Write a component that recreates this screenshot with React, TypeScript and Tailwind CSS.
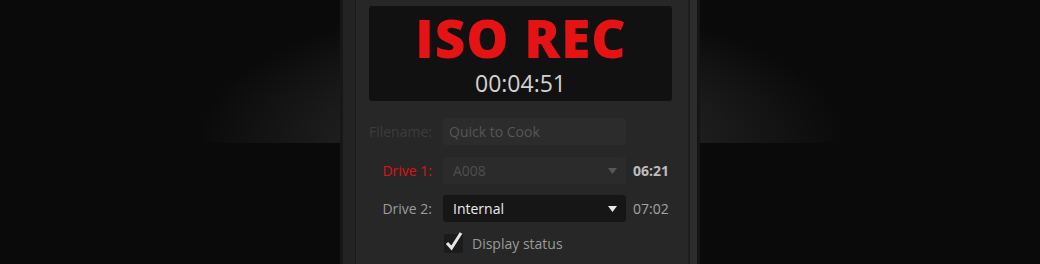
import React from "react";

const font = { fontFamily: '"Open Sans", "Noto Sans", sans-serif' };

function Caret({ color }: { color: string }) {
  return (
    <svg width="9" height="6" viewBox="0 0 9 6" className="shrink-0">
      <path d="M0 0 H9 L4.5 6 Z" fill={color} />
    </svg>
  );
}

export default function App() {
  return (
    <div
      className="w-[1040px] h-[264px] bg-[#0a0a0a] bg-no-repeat bg-[length:100%_143px] bg-[radial-gradient(ellipse_325px_140px_at_520px_143px,#2b2b2b_0%,#222222_45%,#0a0a0a_100%)] flex justify-center"
      style={font}
    >
      <div className="w-[360px] h-full flex">
        <div className="w-[3px] bg-[#171717]" />
        <div className="w-[12px] bg-[#232323]" />
        <div className="w-px bg-[#1b1b1b]" />

        {/* main panel */}
        <div className="flex-1 bg-[#272727] flex flex-col">
          <div className="mt-[6px] ml-[13px] w-[303px] h-[95px] rounded-[3px] bg-[#111111] flex flex-col items-center">
            <div className="mt-[6px] pl-[1px] text-[53px] leading-[52px] font-extrabold tracking-[1px] text-[#e51313]">ISO REC</div>
            <div className="mt-[5px] text-[23px] leading-[28px] text-[#d2d2d2]">00:04:51</div>
          </div>

          <div className="mt-[17px] flex items-center h-[27px]">
            <div className="w-[76px] text-right text-[14px] text-[#3c3c3c]">Filename:</div>
            <div className="ml-[11px] w-[183px] h-full rounded-[3px] bg-[#2c2c2c] flex items-center pl-[6px] text-[14px] text-[#565656]">
              Quick to Cook
            </div>
          </div>

          <div className="mt-[12px] flex items-center h-[27px]">
            <div className="w-[76px] text-right text-[14px] text-[#e01010]">Drive 1:</div>
            <div className="ml-[11px] w-[183px] h-full rounded-[3px] bg-[#2b2b2b] flex items-center pl-[10px] pr-[9px] text-[14px] text-[#4e4e4e]">
              <span className="flex-1">A008</span>
              <Caret color="#575757" />
            </div>
            <div className="ml-[7px] text-[14px] font-bold text-[#bdbdbd]">06:21</div>
          </div>

          <div className="mt-[11px] flex items-center h-[27px]">
            <div className="w-[76px] text-right text-[14px] text-[#9c9c9c]">Drive 2:</div>
            <div className="ml-[11px] w-[183px] h-full rounded-[3px] bg-[#161616] flex items-center pl-[10px] pr-[9px] text-[14px] text-[#ececec]">
              <span className="flex-1">Internal</span>
              <Caret color="#e8e8e8" />
            </div>
            <div className="ml-[7px] text-[14px] text-[#a4a4a4]">07:02</div>
          </div>

          <div className="mt-[12px] ml-[88px] flex items-center h-[19px]">
            <div className="w-[19px] h-[19px] rounded-[2px] bg-[#1b1b1b] relative">
              <svg width="22" height="22" viewBox="0 0 22 22" className="absolute left-[-1px] top-[-4px]">
                <path d="M4 13 L8.5 18 L18 3" stroke="#e6e6e6" strokeWidth="3" fill="none" strokeLinejoin="miter" />
              </svg>
            </div>
            <div className="ml-[9px] text-[14px] text-[#9a9a9a]">Display status</div>
          </div>
        </div>

        <div className="w-[2px] bg-[#1d1d1d]" />
        <div className="w-[7px] bg-[#2c2c2c]" />
        <div className="w-[3px] bg-[#151515]" />
      </div>
    </div>
  );
}
